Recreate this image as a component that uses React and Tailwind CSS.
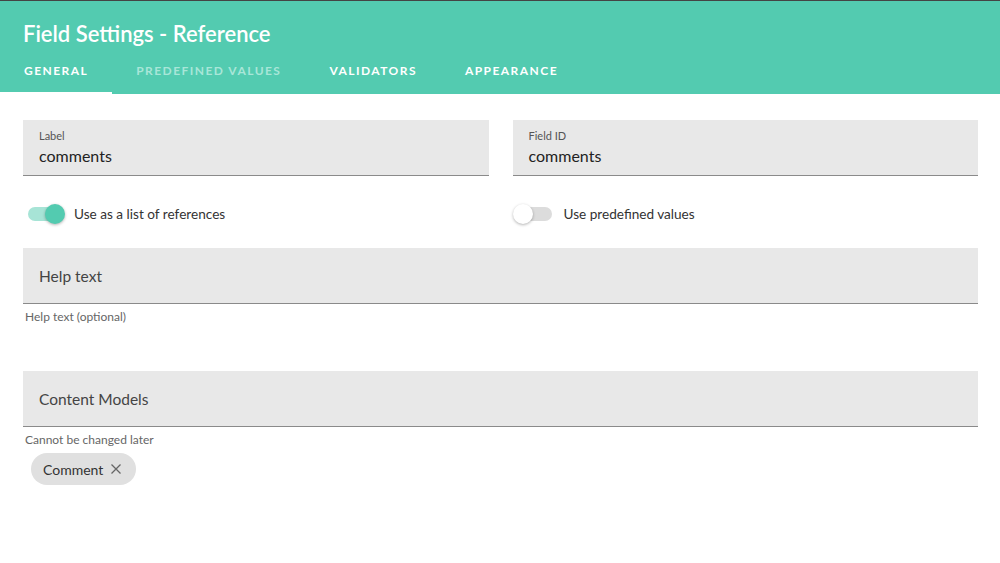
import { useState } from "react";

const FONT = '"Lato","Noto Sans","Liberation Sans",sans-serif';

const tabs = ["General", "Predefined values", "Validators", "Appearance"];

function Field({ label, value, placeholder }) {
  return (
    <div className="h-[56px] bg-[#e8e8e8] border-b border-[#8a8a8a] px-4 flex flex-col justify-center">
      {label && <div className="text-[11px] leading-[14px] text-[#555]">{label}</div>}
      {value && <div className="text-[16px] leading-[20px] text-[#222] mt-[3px]">{value}</div>}
      {placeholder && <div className="text-[15.5px] leading-[20px] text-[#444]">{placeholder}</div>}
    </div>
  );
}

function Toggle({ on, label }) {
  return (
    <div className="flex items-center h-[24px]">
      <div className="relative w-[34px] h-[14px] ml-[5px] mr-[12px]">
        <div className={`w-full h-full rounded-full ${on ? "bg-[#a7e4d6]" : "bg-[#dcdcdc]"}`} />
        <div
          className={`absolute top-[-3px] w-[20px] h-[20px] rounded-full shadow-[0_1px_3px_rgba(0,0,0,0.3)] ${
            on ? "left-[17px] bg-[#53cbb0]" : "left-[-5px] bg-white"
          }`}
        />
      </div>
      <span className="text-[13.6px] text-[#333]">{label}</span>
    </div>
  );
}

export default function App() {
  const [active, setActive] = useState(0);

  return (
    <div className="w-[1000px] h-[563px] bg-white overflow-hidden" style={{ fontFamily: FONT }}>
      <div className="bg-[#53cbb0] border-t border-[#444]">
        <h1 className="px-[23px] pt-[19px] text-[22px] leading-[28px] font-semibold text-white">
          Field Settings - Reference
        </h1>
        <div className="flex">
          {tabs.map((t, i) => (
            <button
              key={t}
              onClick={() => setActive(i)}
              className={`px-6 h-[46px] pt-[2px] text-[12px] font-bold uppercase tracking-[1.45px] border-b-2 ${
                i === active ? "border-white text-white" : "border-transparent"
              } ${i === 1 ? "text-[#a8e6d8]" : i !== active ? "text-white" : ""}`}
            >
              {t}
            </button>
          ))}
        </div>
      </div>

      <div className="pl-[23px] pr-[22px] pt-[26px]">
        <div className="grid grid-cols-2 gap-6">
          <Field label="Label" value="comments" />
          <Field label="Field ID" value="comments" />
        </div>
        <div className="grid grid-cols-2 gap-6 mt-[26px]">
          <Toggle on label="Use as a list of references" />
          <Toggle label="Use predefined values" />
        </div>
        <div className="mt-[22px]">
          <Field placeholder="Help text" />
          <div className="text-[12px] leading-[14px] text-[#666] pl-[2px] mt-[6px]">Help text (optional)</div>
        </div>
        <div className="mt-[47px]">
          <Field placeholder="Content Models" />
          <div className="text-[12px] leading-[14px] text-[#666] pl-[2px] mt-[6px]">Cannot be changed later</div>
          <div className="mt-[6px] ml-[8px] inline-flex items-center h-[32px] rounded-full bg-[#e0e0e0] pl-[12px] pr-[13px] gap-[6px]">
            <span className="text-[14px] text-[#333]">Comment</span>
            <svg width="14" height="14" viewBox="0 0 14 14" className="text-[#666]">
              <path d="M2.5 2.5 L11.5 11.5 M11.5 2.5 L2.5 11.5" stroke="currentColor" strokeWidth="1.3" />
            </svg>
          </div>
        </div>
      </div>
    </div>
  );
}
